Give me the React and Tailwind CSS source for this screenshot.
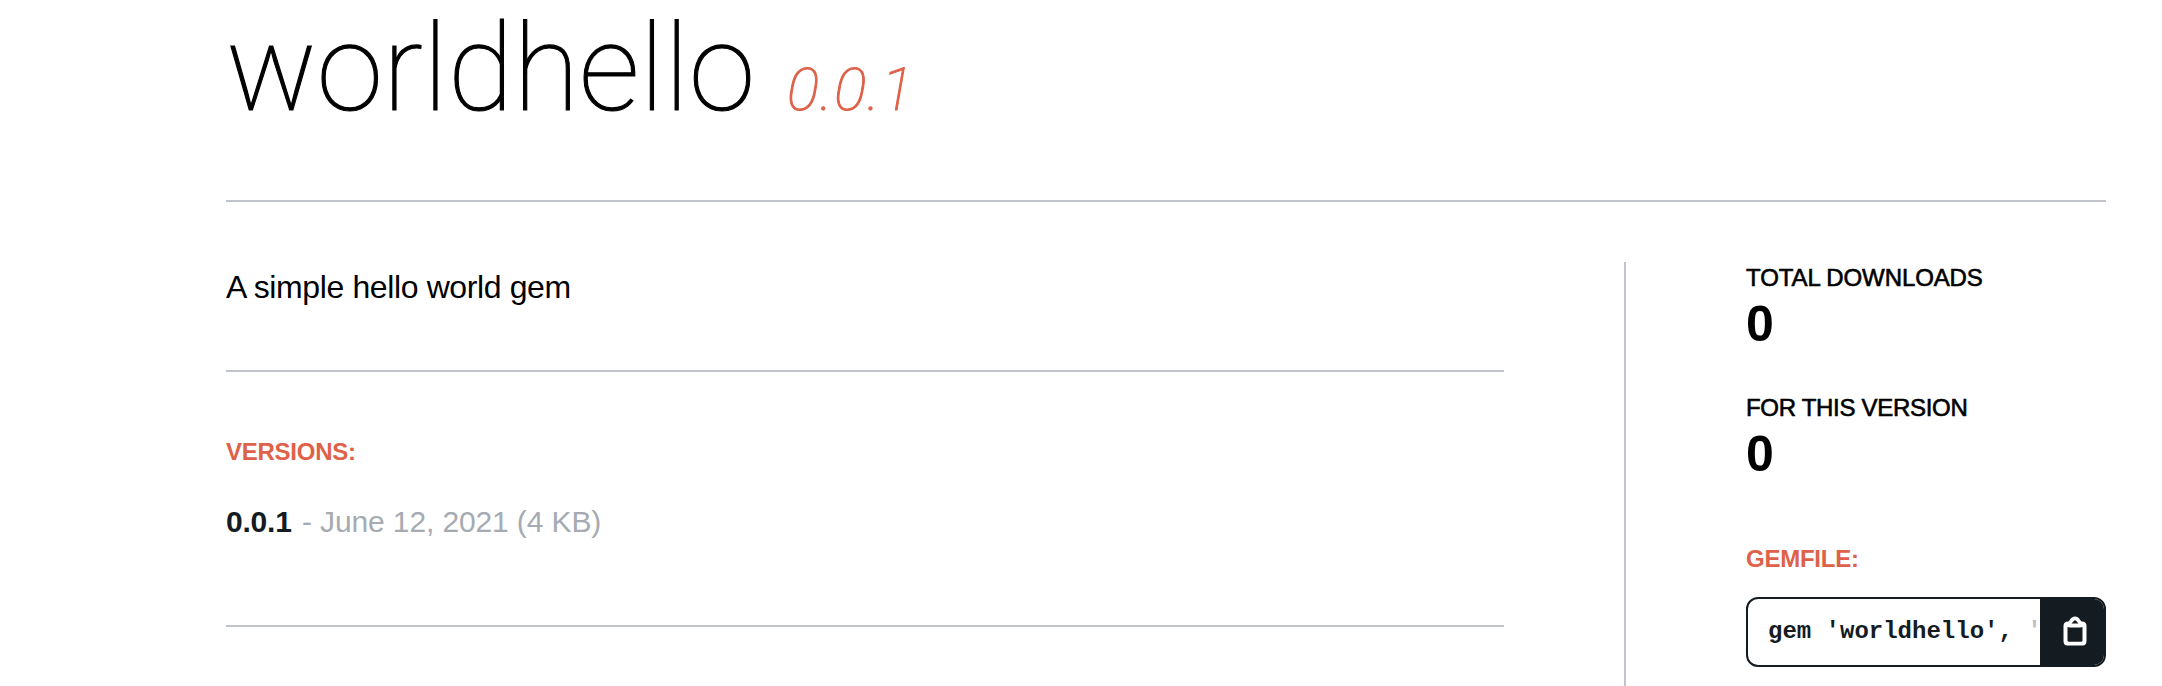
const label = "font-bold text-[24px] leading-[28px] tracking-[-0.25px] whitespace-nowrap";

function Stat({ title, value, className, titleClass }) {
  return (
    <div className={className}>
      <h2 className={"text-[24px] leading-[28px] whitespace-nowrap [-webkit-text-stroke:0.6px_black] " + titleClass}><span>{title}</span></h2>
      <div className="mt-[7px] h-[50px] text-[50px] leading-[50px] font-bold"><span>{value}</span></div>
    </div>
  );
}

export default function App() {
  return (
    <div className="h-[686px] w-[2162px] overflow-hidden bg-white pl-[226px] pr-[56px] font-['Liberation_Sans',sans-serif] text-black">
      <header className="flex h-[202px] items-baseline border-b-2 border-[#c1c4ca] font-['Roboto',sans-serif] font-thin">
        <h1 className="text-[120px] leading-[138px] [-webkit-text-stroke:1.1px_black]"><span>worldhello</span></h1>
        <i className="ml-[32px] text-[60px] tracking-[1.4px] text-[#de6149] [-webkit-text-stroke:1.1px_#de6149]"><span>0.0.1</span></i>
      </header>
      <div className="flex pt-[60px]">
        <main className="w-[1278px]">
          <p className="h-[110px] border-b-2 border-[#c1c4ca] pt-[7px] text-[32px] leading-[36px] tracking-[-0.38px]"><span>A simple hello world gem</span></p>
          <section className="h-[255px] border-b-2 border-[#c1c4ca] pt-[66px]">
            <h3 className={label + " text-[#de6149]"}><span>VERSIONS:</span></h3>
            <div className="mt-[39px] flex text-[30px] leading-[34px] whitespace-pre">
              <b className="tracking-[-0.2px] text-[#141c22]">0.0.1</b>
              <span className="ml-[2px] tracking-[-0.12px] text-[#a6aab2]"> - June 12, 2021 (4 KB)</span>
            </div>
          </section>
        </main>
        <aside className="ml-[120px] h-[424px] w-[482px] border-l-2 border-[#c1c4ca] pl-[120px]">
          <Stat className="pt-[2px]" titleClass="tracking-[-0.1px]" title="TOTAL DOWNLOADS" value="0" />
          <Stat className="mt-[45px]" titleClass="tracking-[-0.3px]" title="FOR THIS VERSION" value="0" />
          <h3 className={label + " mt-[66px] text-[#de6149]"}><span>GEMFILE:</span></h3>
          <div className="mt-[24px] flex h-[70px] overflow-hidden rounded-[12px] border-2 border-[#141c22]">
            <div className="w-[292px] overflow-hidden whitespace-pre pl-[20px] pt-[19px] font-['Liberation_Mono',monospace] text-[24px] leading-[28px] font-bold text-[#141c22]">gem 'worldhello', <span className="text-[#bfbfbf]">'</span></div>
            <button className="flex flex-1 items-center justify-center bg-[#141c22] pb-[2px] pl-[5px]">
              <svg width="24" height="30" viewBox="0 0 24 30" fill="none">
                <path fill="white" fillRule="evenodd" d="M5 5.5C7 5 7.5 0.5 12 0.5S17 5 19 5.5C22 5.5 23.5 7 23.5 10V25C23.5 28 22 29.5 19.5 29.5H4.5C2 29.5 0.5 28 0.5 25V10C0.5 7 2 5.5 5 5.5ZM4.5 11V24.5Q4.5 25.8 5.8 25.8H18.2Q19.5 25.8 19.5 24.5V11L17.5 11.5H6.5ZM8.5 7.5H15.5L12.8 4.4H11.2Z" />
              </svg>
            </button>
          </div>
        </aside>
      </div>
    </div>
  );
}
